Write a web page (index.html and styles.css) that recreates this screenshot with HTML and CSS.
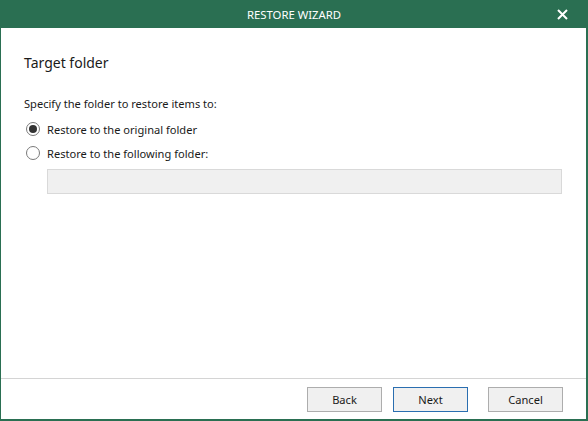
FILE: index.html
```html
<!DOCTYPE html>
<html>
<head>
<meta charset="utf-8">
<link rel="stylesheet" href="styles.css">
</head>
<body>
<div class="window">
  <div class="titlebar">
    <span class="title">RESTORE WIZARD</span>
    <span class="close">
      <svg width="11" height="11" viewBox="0 0 11 11"><path d="M1 1 L10 10 M10 1 L1 10" stroke="#fff" stroke-width="2" fill="none"/></svg>
    </span>
  </div>
  <div class="content">
    <h1 class="heading">Target folder</h1>
    <p class="label">Specify the folder to restore items to:</p>
    <label class="radio-row"><span class="radio checked"></span>Restore to the original folder</label>
    <label class="radio-row"><span class="radio"></span>Restore to the following folder:</label>
    <div class="field"></div>
  </div>
  <div class="footer">
    <button class="btn">Back</button>
    <button class="btn primary">Next</button>
    <button class="btn cancel">Cancel</button>
  </div>
</div>
</body>
</html>
```
FILE: styles.css
```css
* { box-sizing: border-box; }
html, body { margin: 0; padding: 0; }
body {
  width: 588px;
  height: 421px;
  font-family: "Noto Sans", "Open Sans", sans-serif;
  font-size: 11.1px;
  color: #1a1a1a;
  overflow: hidden;
}
.window {
  width: 588px;
  height: 421px;
  display: flex;
  flex-direction: column;
  border: 1px solid #2a6f52;
  border-top: none;
  border-bottom-width: 2px;
  border-right-width: 2px;
  background: #fff;
}
.titlebar {
  height: 28px;
  margin: 0 -2px 0 -1px;
  background: #2a6f52;
  color: #fff;
  display: flex;
  align-items: center;
  justify-content: center;
  position: relative;
}
.title { font-size: 11.3px; }
.close {
  position: absolute;
  right: 20px;
  top: 9px;
  width: 11px;
  height: 11px;
  display: flex;
}
.content {
  flex: 1;
  padding: 0 0 0 23px;
  display: flex;
  flex-direction: column;
}
.heading {
  font-size: 14px;
  font-weight: normal;
  margin: 25px 0 0 0;
  line-height: 20px;
  color: #1a1a1a;
}
.label {
  margin: 23px 0 0 0;
  line-height: 16px;
}
.radio-row {
  display: flex;
  align-items: center;
  height: 16px;
  margin-top: 9px;
}
.radio-row + .radio-row { margin-top: 8px; }
.radio {
  width: 14px;
  height: 14px;
  border: 1px solid #7a7a7a;
  border-radius: 50%;
  margin-right: 7px;
  margin-left: 2px;
  display: flex;
  align-items: center;
  justify-content: center;
  background: #fff;
}
.radio.checked::after {
  content: "";
  width: 8px;
  height: 8px;
  border-radius: 50%;
  background: #333;
}
.field {
  margin: 8px 24px 0 23px;
  height: 25px;
  background: #f0f0f0;
  border: 1px solid #d9d9d9;
}
.footer {
  height: 41px;
  border-top: 1px solid #d4d4d4;
  display: flex;
  justify-content: flex-end;
  align-items: flex-start;
  padding: 8px 23px 0 0;
  gap: 11px;
}
.btn {
  width: 75px;
  height: 25px;
  background: #f0f0f0;
  border: 1px solid #adadad;
  font-family: "Noto Sans", "Open Sans", sans-serif;
  font-size: 11.1px;
  color: #1a1a1a;
  padding: 0;
}
.btn.primary { border-color: #2a6eb0; }
.btn.cancel { margin-left: 9px; }
```
